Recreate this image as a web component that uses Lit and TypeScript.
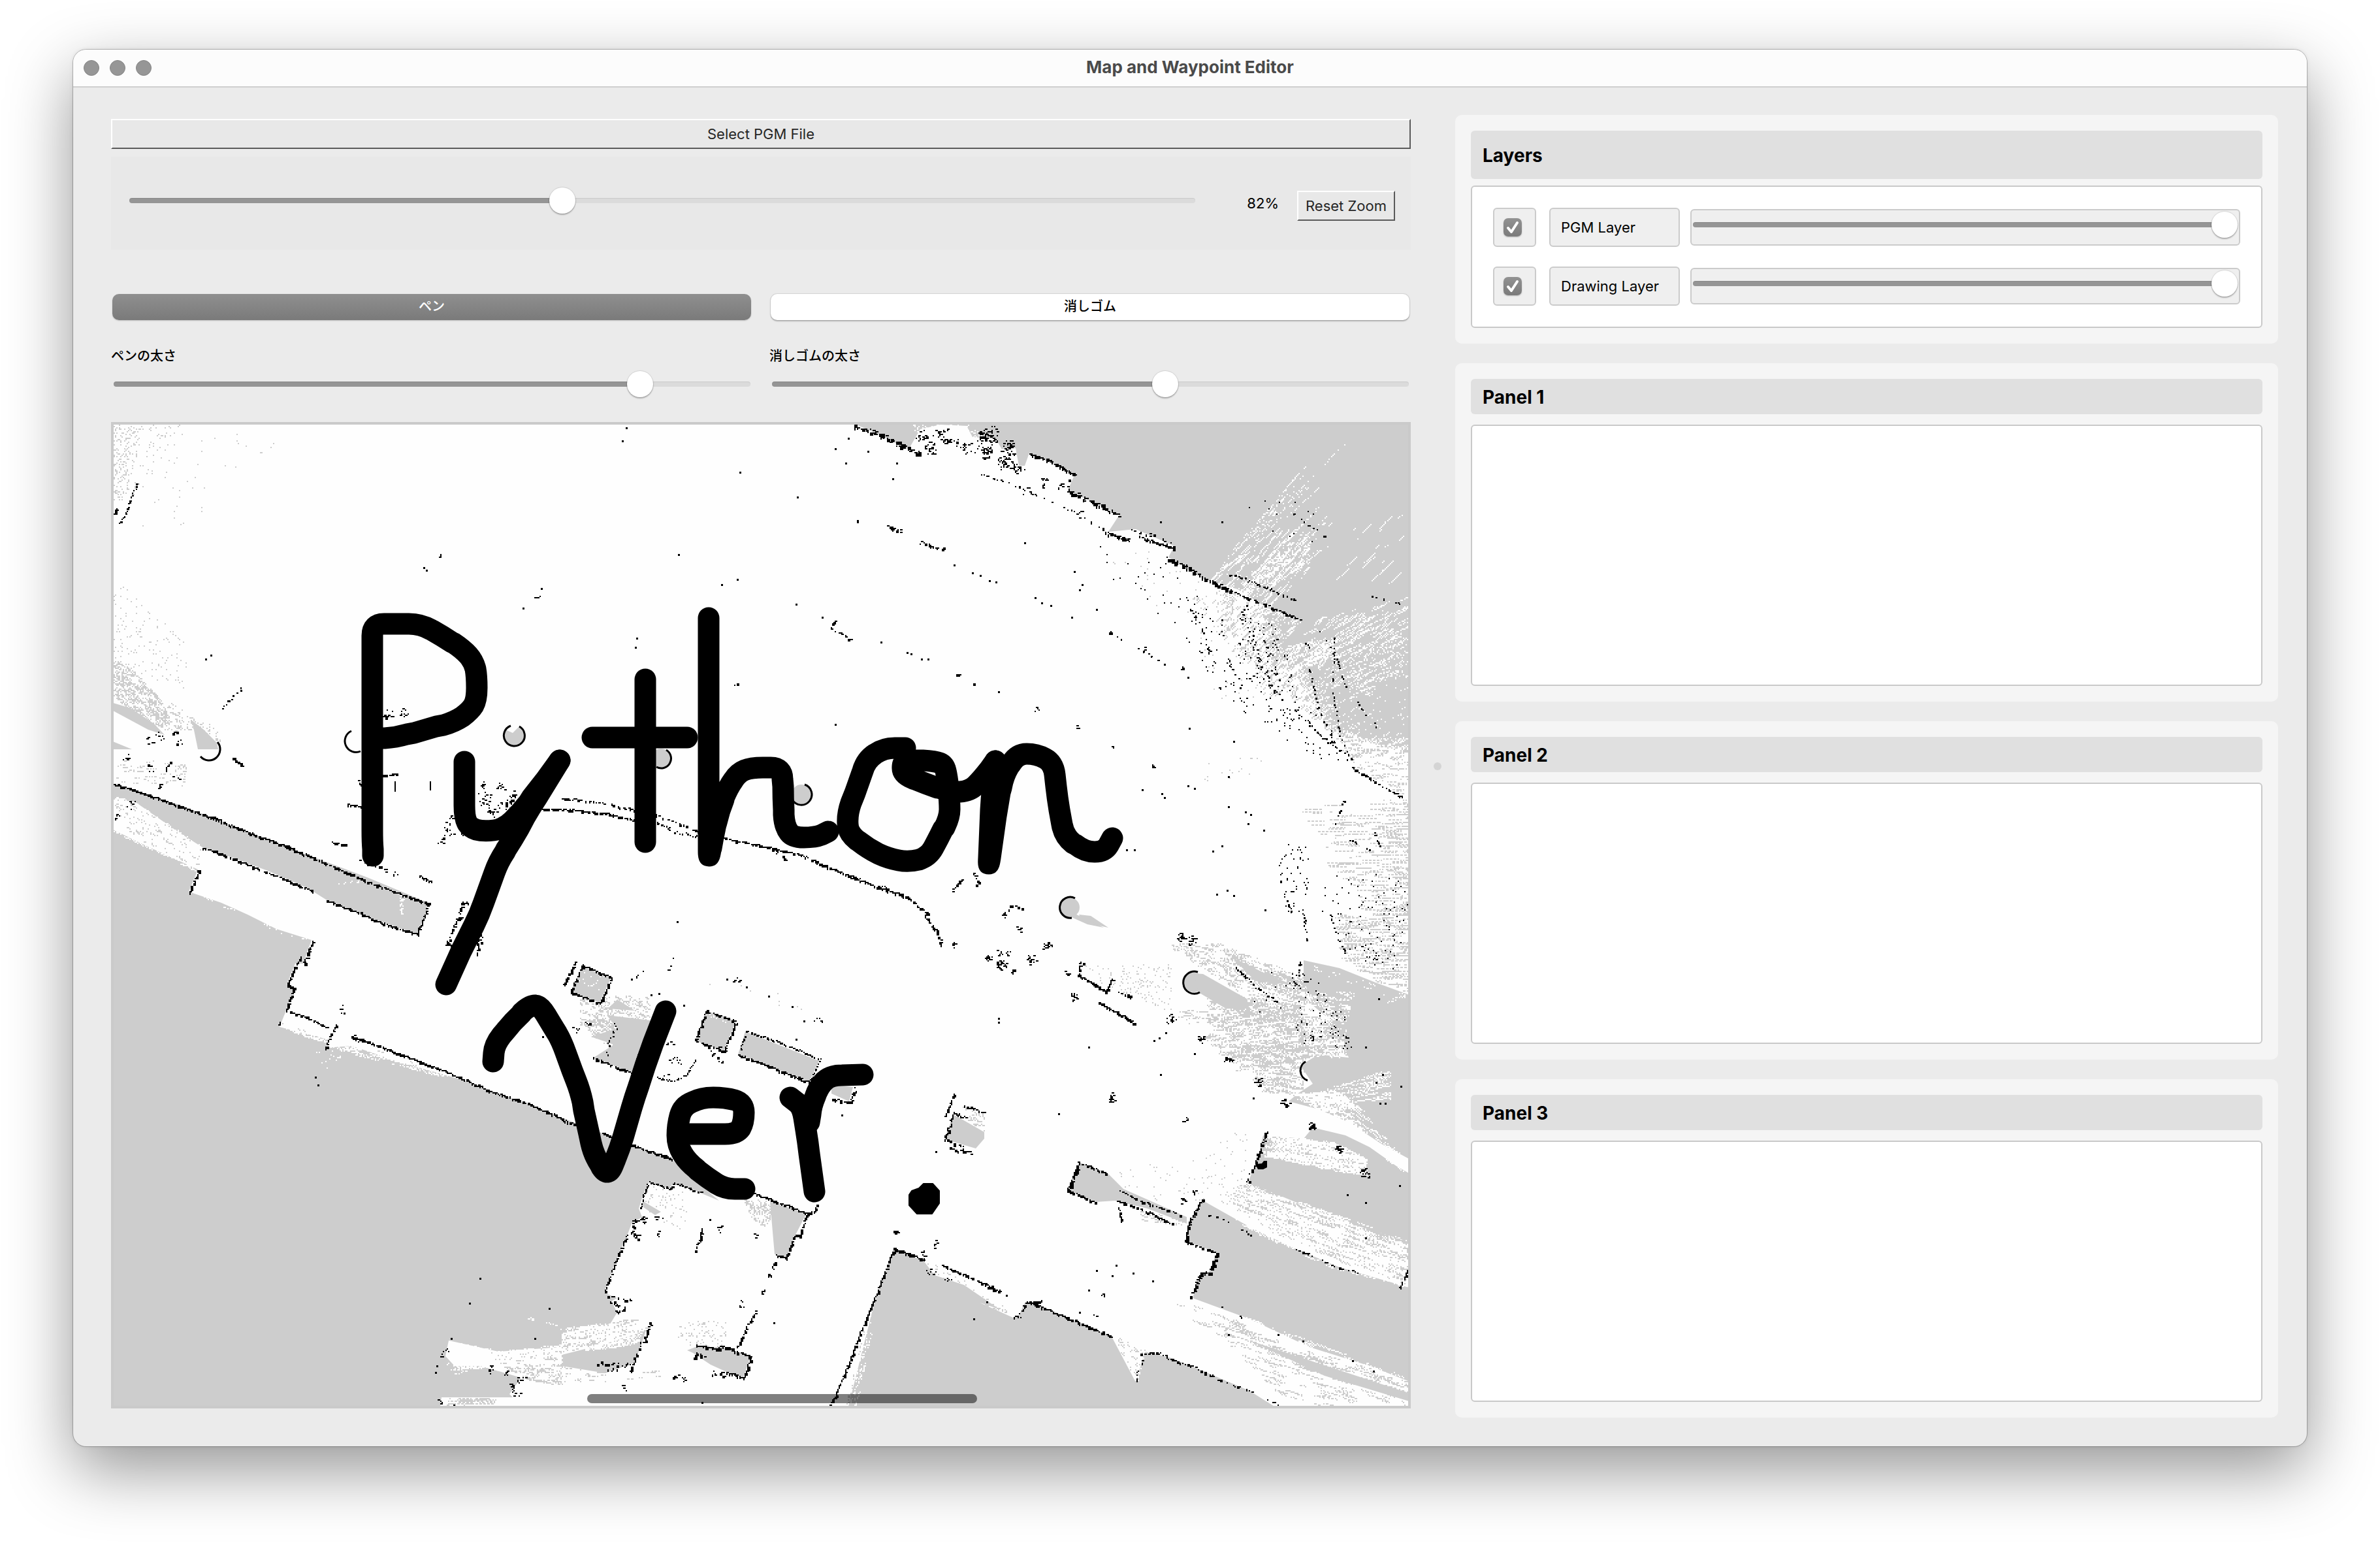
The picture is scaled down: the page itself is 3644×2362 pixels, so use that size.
import { LitElement, html, css, svg } from "lit";
import { customElement, property, state } from "lit/decorators.js";

/* ---------- map geometry ---------- */

type Pt = [number, number];

const SHEETS: Record<string, [number, number, number, number]> = {
  A: [160, 640, 0.4464, 0.4847],
  B: [860, 640, 0.4464, 0.4847],
  C: [1500, 640, 0.4592, 0.4847],
  D: [160, 1400, 0.4464, 0.4974],
  E: [860, 1400, 0.4464, 0.4974],
  F: [1500, 1400, 0.4592, 0.4974],
};

// "A30,1155 270,1225 D1070,60": a letter switches sheet for the points after it.
function pts(spec: string): Pt[] {
  let sheet = SHEETS.A;
  return spec
    .trim()
    .split(/\s+/)
    .map((token) => {
      let t = token;
      if (/[A-F]/.test(t[0])) {
        sheet = SHEETS[t[0]];
        t = t.slice(1);
      }
      const [x, y] = t.split(",").map(Number);
      return [Math.round(sheet[0] + x * sheet[2]), Math.round(sheet[1] + y * sheet[3])] as Pt;
    });
}

const toPath = (p: Pt[], close = false) => "M" + p.map((q) => q.join(" ")).join("L") + (close ? "Z" : "");
const area = (spec: string) => toPath(pts(spec), true);

// A polyline whose corners are rounded off.
function stroke(spec: string, radius = 18): string {
  const p = pts(spec);
  const toward = (a: Pt, b: Pt): string => {
    const len = Math.hypot(b[0] - a[0], b[1] - a[1]) || 1;
    const k = Math.min(radius, len / 2) / len;
    return `${Math.round(a[0] + (b[0] - a[0]) * k)} ${Math.round(a[1] + (b[1] - a[1]) * k)}`;
  };
  let d = `M${p[0].join(" ")}`;
  for (let i = 1; i < p.length - 1; i++) d += `L${toward(p[i], p[i - 1])}Q${p[i].join(" ")} ${toward(p[i], p[i + 1])}`;
  return d + `L${p[p.length - 1].join(" ")}`;
}

let seed = 7;
function rnd(): number {
  seed = (seed * 1664525 + 1013904223) >>> 0;
  return seed / 4294967296;
}
const snap = (v: number) => Math.round(v / 2) * 2;
const cell = (x: number, y: number, w = 2, h = 2) => `M${snap(x)} ${snap(y)}h${w}v${h}h${-w}z`;

function inside(x: number, y: number, p: Pt[]): boolean {
  let r = false;
  for (let i = 0, j = p.length - 1; i < p.length; j = i++) {
    const [xi, yi] = p[i];
    const [xj, yj] = p[j];
    if (yi > y !== yj > y && x < ((xj - xi) * (y - yi)) / (yj - yi) + xi) r = !r;
  }
  return r;
}

// Loose cells spread over an area, optionally as short runs in one direction (degrees).
function field(spec: string, count: number, angle = 0, run = 1): string {
  const p = pts(spec);
  const xs = p.map((q) => q[0]);
  const ys = p.map((q) => q[1]);
  const x0 = Math.min(...xs);
  const y0 = Math.min(...ys);
  const w = Math.max(...xs) - x0;
  const h = Math.max(...ys) - y0;
  const a = (angle * Math.PI) / 180;
  let d = "";
  for (let i = 0; i < count; i++) {
    const x = x0 + rnd() * w;
    const y = y0 + rnd() * h;
    if (!inside(x, y, p)) continue;
    const n = 1 + Math.floor(rnd() * run);
    for (let k = 0; k < n; k++) {
      const cx = x + Math.cos(a) * k * 3;
      const cy = y + Math.sin(a) * k * 3;
      if (inside(cx, cy, p)) d += cell(cx, cy);
    }
  }
  return d;
}

// A scanned wall: cells along a polyline with some gaps and sideways noise.
function wall(spec: string, keep = 0.9, noise = 1, size = 4): string {
  const p = pts(spec);
  let d = "";
  for (let i = 1; i < p.length; i++) {
    const [x1, y1] = p[i - 1];
    const [x2, y2] = p[i];
    const len = Math.hypot(x2 - x1, y2 - y1);
    for (let s = 0; s <= len; s += 2) {
      if (rnd() > keep) continue;
      const nx = (rnd() - 0.5) * 2 * noise;
      const ny = (rnd() - 0.5) * 2 * noise;
      const w = rnd() < 0.5 ? size : 2;
      d += cell(x1 + ((x2 - x1) * s) / len + nx, y1 + ((y2 - y1) * s) / len + ny, w, rnd() < 0.4 ? size : 2);
    }
  }
  return d;
}

// Small clumps of cells around each point.
function clumps(spec: string, count: number, radius: number): string {
  let d = "";
  for (const [x, y] of pts(spec)) {
    for (let i = 0; i < count; i++) {
      const r = rnd() * radius;
      const a = rnd() * Math.PI * 2;
      d += cell(x + Math.cos(a) * r, y + Math.sin(a) * r, rnd() < 0.4 ? 4 : 2, 2);
    }
  }
  return d;
}

const singles = (spec: string) => pts(spec).map(([x, y]) => cell(x, y, 3, 3)).join("");

// Beams leaving one point between two headings.
function beams(origin: string, from: number, to: number, near: number, far: number, count: number, keep = 0.6): string {
  const [[ox, oy]] = pts(origin);
  let d = "";
  for (let i = 0; i < count; i++) {
    const a = ((from + rnd() * (to - from)) * Math.PI) / 180;
    const start = near + rnd() * (far - near) * 0.5;
    const end = start + rnd() * (far - start);
    for (let r = start; r < end; r += 3) {
      if (rnd() < keep) d += cell(ox + Math.cos(a) * r, oy + Math.sin(a) * r);
    }
  }
  return d;
}

const UNKNOWN = [
  "A30,1155 270,1225 470,1300 700,1380 900,1450 1110,1530 D1100,0 1070,60 880,0 A760,1520 700,1485 560,1430 440,1388 335,1355 250,1305 110,1215 70,1200 30,1200",
  "A20,1295 130,1345 320,1425 290,1495 400,1530 490,1568 D590,45 710,78 680,150 655,150 625,215 650,225 622,295 600,345 765,385 760,410 850,405 1000,450 1250,515 1568,625 E60,645 250,712 380,755 500,850 540,880 460,850 380,828 370,845 300,822 280,860 265,905 275,930 240,950 225,990 180,1080 145,1165 190,1180 170,1190 190,1225 165,1260 0,1290 D1568,1330 1350,1345 1180,1310 1170,1360 1200,1390 1290,1390 1430,1425 1390,1475 1400,1485 1155,1485 1150,1530 20,1530",
  "E0,1355 150,1320 290,1280 250,1380 150,1412 0,1390",
  "A30,900 90,915 170,965 205,1000 150,985 30,925",
  "A30,1022 95,1045 30,1045",
  "A300,955 340,985 385,1025 390,1045 320,1045",
  "B985,10 1070,45 1190,100 1230,35 1300,20 1390,25 1410,60 1490,65 1510,100 C60,100 120,95 130,150 150,150 165,110 315,180 295,230 465,305 430,360 520,350 650,405 630,440 750,510 860,540 960,600 1080,640 1000,720 1060,750 1090,800 1200,760 1440,665 1440,10",
  "E70,160 170,192 130,272 32,238",
  "E155,310 305,325 250,490 110,440 180,400 100,375 190,350",
  "E190,262 250,295 160,290",
  "E495,295 598,328 555,420 458,388",
  "E630,360 882,450 848,515 605,430",
  "E925,525 1000,530 985,575 925,550",
  "E1345,615 1450,670 1450,690 1420,720 1312,692",
  "E715,885 840,918 800,990 770,1055 730,1045",
  "E430,1340 460,1330 550,1330 648,1362 622,1425 560,1405 510,1385 450,1350",
  "E275,880 340,915 320,925 280,900",
  "E140,680 180,685 157,740",
  "E1138,1030 1240,1065 1280,1110 1380,1140 1500,1215 F0,1195 110,1240 130,1235 150,1195 170,1190 440,1298 520,1440 550,1345 640,1365 720,1395 900,1465 1010,1530 E980,1530 1070,1200",
  "F745,880 900,960 1030,1020 1200,1085 1440,1150 1440,1440 1300,1390 1100,1330 900,1245 710,1180 735,1100 765,1100 790,1040 685,1005 700,940",
  "F330,762 425,795 480,845 690,930 690,950 560,905 450,880 385,885 292,848",
  "F1080,140 1200,165 1320,210 1440,250 1440,755 1340,705 1230,640 1130,600 1030,575 1060,550 1110,520 1070,465 1130,430 1230,440 1190,340 1110,280 1080,200",
  "F945,680 1080,690 1110,655 1220,680 1300,715 1390,775 1440,800 1440,1010 1200,940 1000,865 895,825 930,740",
  "F900,1310 1440,1475 1440,1500 1150,1420",
  "F840,130 960,185 1040,215 920,205",
  "F330,0 370,5 430,40 380,30 340,18",
].map(area);

const DISCS = ["A1405,1002", "B340,1075", "B823,1188", "C300,1545", "F715,210"].map((s) => pts(s)[0]);

const SPECKS_DARK = [
  field("A30,20 130,20 110,90 90,200 60,260 30,260", 230),
  field("A30,20 280,20 240,120 130,200 100,240 30,240", 90),
  field("A30,20 400,20 640,90 380,200 320,340 110,340 30,220", 70),
  field("A30,500 130,590 270,700 290,860 30,780", 230),
  field("A30,750 100,800 190,880 230,960 180,980 30,880", 700, 28, 4),
  field("A120,900 230,900 300,940 330,980 210,990", 120, 28, 3),
  field("A290,940 400,980 390,1040 320,1010", 100),
  field("A30,1080 280,1080 280,1160 30,1150", 60, 0, 3),
  field("A30,1180 120,1210 330,1350 320,1420 130,1340 30,1290", 330, 20, 4),
  field("C380,400 620,420 850,530 1000,720 850,1000 700,700", 230),
  field("C760,520 1090,640 1200,800 1440,860 1440,1060 1150,980 1000,860 850,720", 2200, -35, 4),
  field("C700,560 900,580 1100,860 950,880", 420, -45, 3),
  field("C940,600 1100,640 1220,760 1120,850 960,760", 900, -32, 6),
  field("C1080,800 1200,750 1440,660 1440,1060 1150,980", 2300, -24, 9),
  field("C1180,900 1440,800 1440,1000 1260,1000", 700, -20, 9),
  field("C1150,960 1440,1040 1440,1200 1260,1120", 320, 0, 5),
  field("C720,1080 960,1060 960,1110 720,1180", 26),
  field("C1060,1220 1440,1210 1440,1568 1280,1568 1180,1450", 260, 0, 10),
  field("C1340,1200 1440,1200 1440,1568 1300,1568", 150, 0, 8),
  field("F1180,0 1440,0 1440,250 1300,200 1200,130", 360, 0, 8),
  field("F620,90 780,80 1100,200 1110,300 900,260 700,140", 800, 15, 5),
  field("F820,110 1000,180 1090,200 1090,270 920,220", 380, 18, 8),
  field("F700,200 900,250 1080,280 1100,340 800,300", 300, 14, 6),
  field("F760,220 920,270 1080,280 1100,440 850,480 750,380", 700, -8, 8),
  field("F1060,300 1200,330 1240,430 1060,440", 420, -4, 8),
  field("F640,300 960,260 960,330 660,340", 90, -8, 5),
  field("F850,400 1080,380 1080,560 930,540", 330, 5, 7),
  field("F460,150 640,150 640,300 480,250", 150),
  field("F340,150 440,160 500,260 430,240", 70),
  field("F400,780 690,760 900,640 880,820 700,920 480,840", 190),
  field("F600,1190 720,1200 1000,1300 1440,1440 1440,1530 1050,1530 800,1300", 520, 16, 9),
  field("F800,1230 1000,1320 1440,1440 1440,1490 1100,1400 850,1300", 500, 18, 14),
  field("F780,870 890,820 1000,860 1440,1010 1440,1150 1200,1070 950,970", 1150, 19, 10),
  field("F1000,870 1440,1010 1440,1070 1200,980", 300, 19, 14),
  field("F520,900 700,930 700,960 540,940", 60, 12, 4),
  field("F0,1170 120,1230 100,1240 0,1220", 110),
  field("F440,1290 550,1340 520,1440", 120, 60, 3),
  field("E1240,1060 1350,1110 1568,1230 1500,1220 1300,1140", 260),
  field("E1120,1090 1140,1040 1060,1250 1000,1512 970,1512 1060,1190", 420, 105, 3),
  field("E60,250 300,250 300,330 60,340", 210, 20, 3),
  field("E70,320 200,320 180,410 90,370", 200, 20, 3),
  field("E490,185 830,240 820,300 500,230", 16),
  field("E1370,590 1450,610 1450,670 1390,630", 120),
  field("E270,830 420,850 430,980 280,920", 90),
  field("E620,870 720,880 730,920 690,960 650,930", 160, 75, 4),
  field("E390,1250 560,1250 560,1330 400,1320", 90),
  field("E0,1260 300,1240 290,1280 0,1350", 330, -14, 5),
  field("E0,1380 170,1410 350,1400 350,1420 0,1450", 60, 0, 4),
  field("D1300,1350 1568,1330 1568,1450 1430,1430", 300, 8, 5),
  field("D1160,1488 1340,1488 1340,1510 1160,1510", 40, 0, 8),
  field("D600,330 770,380 760,400 600,350", 40, 14, 6),
  field("D840,385 1200,500 1000,455 850,410", 120, 14, 5),
].join("");

const SPECKS_LIGHT = [
  beams("C640,640", -50, -42, 110, 400, 18, 0.4),
  beams("C640,760", -48, -36, 130, 330, 44, 0.45),
  field("C740,520 860,430 1000,340 1100,370 1100,480 960,600", 380, -48, 7),
  field("C1090,640 1440,560 1440,680 1200,760 1000,820", 260, -28, 12),
  field("C1000,720 1200,690 1130,800", 220, -28, 6),
  field("C1140,330 1440,300 1440,540 1150,560", 26, -42, 9),
  field("B1200,20 1400,20 1500,110 1230,110", 420),
  field("F1130,310 1440,215 1440,250 1150,320", 70, -14, 10),
  field("F1090,150 1330,215 1300,230 1100,170", 50, 18, 5),
  field("F1060,560 1370,470 1370,570 1120,600", 120, -10, 14),
  field("F1030,550 1200,540 1260,600 1130,610", 220, -8, 12),
  field("F1080,570 1250,570 1440,780 1400,790 1230,650", 220, 34, 10),
  field("F1130,600 1230,610 1300,680 1220,640", 120, 10, 8),
  field("F1070,240 1250,230 1200,440 1080,440", 200, 8, 6),
  field("F950,672 1180,700 1290,750 1290,800 1150,785 940,740", 520, 9, 14),
  field("F935,725 1020,730 1010,745 935,745", 30, 0, 14),
  field("F760,880 900,830 1180,920 1440,1050 1440,1150 1150,1080 900,970", 1500, 18, 9),
  field("F1000,860 1440,1000 1440,1060 1180,930", 240, 18, 10),
  field("F730,1190 900,1240 1440,1430 1440,1450 1000,1320", 600, 18, 10),
  field("F450,1310 550,1345 525,1440", 160, 60, 4),
  field("E1060,1200 1075,1230 1010,1512 985,1512", 200, 105, 3),
  field("D1180,1310 1350,1340 1568,1320 1568,1380 1200,1400", 420, 6, 10),
  field("D1160,1380 1300,1390 1200,1415", 30, -5, 5),
  field("D1410,1220 1568,1265 1568,1275 1450,1245", 40, 14, 4),
  field("E0,1270 300,1245 250,1330 0,1345", 260, -14, 10),
  field("D600,340 770,350 760,395 600,350", 130, 14, 8),
  field("D765,400 850,390 1250,515 1000,465 850,430", 420, 14, 8),
  field("D720,410 850,400 760,490", 40),
  field("D480,0 720,80 700,85 560,45", 60),
  field("A30,1190 110,1215 330,1350 310,1430 130,1350 30,1310", 600, 22, 7),
  field("A290,1490 500,1560 480,1568 380,1535", 90, 20, 4),
  field("E60,170 150,190 130,230 50,210", 30),
  field("E500,300 590,330 570,335 500,318", 30),
  field("A790,1470 880,1455 870,1465", 20),
  field("A1012,1500 1025,1500 1022,1568 1014,1568", 40),
].join("");

const WALLS = [
  wall("A30,1153 110,1178 210,1208 330,1248 470,1300 620,1352 760,1405 900,1462 1020,1505 1108,1533", 0.98),
  wall("A335,1355 400,1375 470,1402 600,1450 715,1492", 0.75),
  wall("A760,1522 890,1568 D950,25 1070,60", 0.97),
  wall("A1108,1533 D1098,0 1070,60", 0.97),
  wall("A322,1425 292,1495", 0.95),
  wall("A112,205 85,260 75,300 52,330", 0.8, 1, 3),
  wall("A45,282 32,305", 1, 2, 4),
  wall("D712,80 680,152", 1, 1, 5),
  wall("D672,130 645,170 628,215 648,225 622,295", 0.95, 1, 4),
  wall("D625,295 680,312 765,345", 0.85),
  wall("D795,335 768,380 758,415", 0.95),
  wall("D848,375 900,390 1040,438 1180,487 1320,540 1460,585 1568,625 E0,632 60,650", 0.98),
  wall("E140,672 250,712 380,752", 0.95),
  wall("E650,852 740,885 840,918 868,912 875,890", 0.98),
  wall("E840,920 815,990 798,988 768,1055 730,1045", 0.98, 1, 4),
  wall("E300,822 375,845 385,825 480,855", 0.85, 1, 3),
  wall("E298,822 280,860 268,905", 0.9, 1, 3),
  wall("E290,930 245,940 240,975 262,998", 0.7, 2),
  wall("E222,985 180,1080 143,1167", 0.9),
  wall("E150,1172 235,1187", 0.5, 2),
  wall("E165,1190 190,1200 185,1225 215,1210", 0.7, 2),
  wall("E305,1255 285,1300 250,1365 235,1410", 0.85, 2),
  wall("E92,1383 165,1380 230,1380 150,1405", 0.45, 3),
  wall("E480,960 478,990 455,1037", 0.8),
  wall("E728,1068 718,1100", 0.7),
  wall("E662,1220 635,1270 602,1330", 0.9, 1, 4),
  wall("E460,1325 530,1335 548,1325 648,1362 622,1425 560,1405", 0.97, 1, 5),
  wall("E447,1368 460,1350 500,1365", 0.85, 2, 4),
  wall("E512,1410 560,1415", 0.8, 3),
  wall("E1138,1028 1245,1062", 0.98, 1, 5),
  wall("E1138,1028 1080,1165 1040,1250 975,1400 920,1512", 0.98, 1, 4),
  wall("E1300,1078 1400,1115 1505,1158", 0.7),
  wall("F0,1133 70,1160", 0.6),
  wall("F110,1238 135,1232 152,1193 200,1190", 0.85, 2),
  wall("F170,1192 290,1240 340,1258 438,1296", 0.95, 1, 4),
  wall("F540,1350 590,1350 640,1368 720,1393 780,1422", 0.75, 2),
  wall("F780,1425 900,1465 1000,1512", 0.25, 1),
  wall("F552,1360 525,1405 518,1440", 0.45, 2),
  wall("F328,762 292,848", 1, 1, 6),
  wall("F328,762 425,796", 0.95, 1),
  wall("F292,848 385,885", 0.95, 1),
  wall("F468,848 530,878 600,900 680,928", 0.55, 1),
  wall("F452,880 540,905 645,952", 0.7, 1),
  wall("F463,900 468,940", 0.9),
  wall("F742,875 700,940 683,1005", 1, 1, 5),
  wall("F683,1005 788,1040", 0.7, 1),
  wall("F788,1040 765,1100 735,1103 702,1180", 0.98, 2, 5),
  wall("F957,670 925,740 890,825", 0.9, 2),
  wall("F325,185 420,235 445,192", 0.9, 1),
  wall("F398,270 518,333", 0.97),
  wall("F340,140 330,180", 0.9, 3),
  wall("F462,238 510,255", 0.7),
  wall("F850,158 925,225 990,268", 0.6, 1, 3),
  wall("F1000,1012 1100,1045 1200,1088 1290,1110", 0.3, 1),
  wall("F745,915 820,940 910,990", 0.3, 1, 3),
  wall("F1428,1085 1400,1150", 0.7),
  wall("F790,1200 880,1240", 0.3, 1, 3),
  wall("E70,155 170,192 130,272 32,238 70,155", 0.9),
  wall("E50,140 5,220", 0.85),
  wall("E495,295 598,328 555,420 458,388 495,295", 0.85, 1),
  wall("E490,410 550,455", 0.6, 3),
  wall("E630,358 750,395 885,445 848,515", 0.75, 1, 3),
  wall("E605,430 848,515", 1, 1, 4),
  wall("E605,430 630,370", 0.6, 1, 3),
  wall("E110,440 250,490", 0.95),
  wall("E265,430 248,490", 0.85, 2),
  wall("E185,330 150,440", 0.35, 4, 3),
  wall("E325,498 385,512 430,490 460,445", 0.7, 1, 2),
  wall("E1345,550 1312,625", 0.85, 1),
  wall("E1390,625 1345,610 1312,692 1375,715", 0.85, 2),
  wall("E1380,588 1450,610", 0.9),
  wall("E1328,718 1405,732", 0.85, 2),
  wall("E928,568 985,575 1010,530", 0.8, 2),
  wall("E228,205 282,175", 0.6, 2, 3),
  wall("E382,120 360,185", 0.3, 1, 3),
  wall("B0,1200 70,1205 160,1220 250,1238 320,1252 400,1280 470,1305", 0.65, 1, 4),
  wall("A1500,1232 B60,1238 160,1250 250,1268", 0.95, 1, 4),
  wall("B325,1270 370,1300 465,1322", 0.6, 3, 3),
  wall("B545,1325 660,1345 740,1362 820,1378 880,1405 1000,1450 1100,1485 1180,1510 1255,1565", 0.95, 1, 4),
  wall("B860,1398 1000,1450 1120,1490", 0.5, 3, 2),
  wall("B730,1360 760,1400", 0.3, 4),
  wall("E1240,0 1285,50 1300,90", 0.8, 2),
  wall("B1000,22 1080,48 1190,98 1230,112", 1, 3, 5),
  wall("C165,112 230,135 315,178", 1, 1, 5),
  wall("C295,180 295,230", 0.3, 2),
  wall("C290,228 380,265 465,305", 1, 3, 5),
  wall("C420,362 500,385", 1, 2, 5),
  wall("C500,355 570,370 650,403", 0.6, 4),
  wall("C530,372 645,412", 0.9, 1),
  wall("C620,440 680,465 750,508 830,540", 1, 2, 5),
  wall("C830,540 900,570 1070,635", 0.75, 1, 4),
  wall("C815,485 950,530 1050,575", 0.6, 2, 3),
  wall("C0,175 100,205 200,245 320,300 420,355", 0.4, 1, 3),
  wall("C1050,925 1150,1010 1240,1080", 0.4, 3, 3),
  wall("C1240,1100 1330,1155 1428,1210", 0.6, 1),
  wall("C880,590 920,740 960,830 1000,890", 0.45, 4, 3),
  wall("C680,560 730,640 770,760", 0.3, 2, 3),
  wall("C800,630 830,770 900,900", 0.3, 2, 3),
  wall("C950,690 980,800 1010,880", 0.35, 4, 3),
  wall("C1130,670 1190,760 1210,830 1290,940 1330,980", 0.22, 1, 3),
  wall("C1100,790 1125,920 1190,1040", 0.3, 1, 3),
  wall("C1180,690 1175,860 1200,1000 1240,1080", 0.28, 1, 3),
  wall("C1050,690 1140,745", 0.3, 1, 3),
  wall("C1030,290 1100,340 1165,380", 0.25, 1, 3),
  wall("C1300,560 1430,592", 0.2, 1, 3),
  wall("C430,678 540,730 620,780", 0.3, 1, 3),
  wall("C1000,1460 1040,1568", 0.3, 1, 3),
  wall("F1080,0 1088,90", 0.35, 1, 3),
  wall("F1170,0 1185,60 1222,125", 0.45, 1, 3),
  wall("F1070,140 1050,220", 0.5, 3, 3),
  wall("C1215,1210 1175,1290", 0.4, 1, 3),
  wall("C1220,1325 1300,1360", 0.4, 1, 3),
  wall("C1315,1310 1330,1350", 0.5, 1, 3),
  wall("B1115,342 1170,360", 0.9, 2),
  wall("B1230,392 1305,412", 0.9, 2),
  wall("B925,665 995,702", 0.75, 2),
  wall("B935,640 922,660", 0.7),
  wall("A955,1128 998,1125", 0.95),
  wall("A992,1145 992,1173", 1, 0, 2),
  wall("A1113,1148 1113,1173", 1, 0, 2),
  wall("A955,938 985,940", 1, 1, 4),
  wall("A832,1218 882,1228", 0.9),
  wall("A870,1142 882,1162", 0.9, 1, 4),
  wall("A780,1340 825,1348", 0.95, 1, 4),
  wall("A365,1258 402,1268", 1, 1, 5),
  wall("A440,1072 470,1098", 0.95, 1, 4),
  wall("A225,1088 210,1112", 1, 2, 4),
  wall("A248,988 228,998", 1),
  wall("A465,853 400,915 368,965", 0.25, 1, 3),
  wall("A870,1390 1000,1440", 0.5, 3),
  wall("A1078,1445 1118,1462", 0.95, 1, 4),
  wall("A1215,1560 1230,1528 1255,1530", 0.9, 2, 4),
  wall("D1225,8 1210,10 1172,90 1192,92", 0.9, 1),
  wall("D1290,65 1268,120", 0.9, 3, 4),
  wall("C95,1550 105,1538 140,1545", 1, 1, 4),
  wall("E1340,-70 1345,-85 1375,-110", 0.8, 1, 4),
  wall("E1410,-130 1430,-105 1420,-90", 0.9, 1, 4),
].join("");

const CLUMPS = [
  clumps("A1150,432 1482,562 B1360,808 1410,840 C190,920 320,978 548,730 672,790", 4, 4),
  clumps("B598,840 C435,678 445,1037 800,852 572,1098 F385,1235 410,1173", 6, 3),
  clumps("F225,95 170,138 72,155 310,250", 16, 8),
  clumps("F22,133 92,120 110,172 292,180", 6, 6),
  clumps("F668,66 708,78 635,322 735,380 830,448 928,512 1018,582 1108,650 1200,720 1285,795 438,562", 18, 8),
  clumps("F684,631 715,853 675,880 1108,380 1218,375", 6, 5),
  clumps("A970,935 1025,930 1295,1160 1360,1165", 9, 8),
  clumps("A1300,1200 1335,1245 1375,1220 1400,1195", 16, 12),
  clumps("A1160,1330 1175,1295 1190,1260 1225,1310", 10, 12),
  clumps("A185,1005 160,1020 248,1030 90,1218 40,1255 75,1075 150,1105 250,1135 185,1165", 6, 8),
  clumps("B1240,60 1300,50 1330,70 1380,85 1440,60 1445,100 1530,95 1520,140 1470,50 1260,100", 20, 14),
  clumps("C10,60 20,110 100,90 80,140 45,70 130,152", 16, 11),
  clumps("C220,200 150,225 320,300 210,190 270,210", 6, 10),
  clumps("E540,410 880,325 600,200 385,1420 420,1430 215,1450 610,1200", 5, 7),
  clumps("E1265,1095 1325,1120 1240,1035 1278,1015", 7, 8),
  clumps("E665,990 540,965 330,985 330,930 255,985 270,940", 5, 7),
  clumps("E710,1110 690,1160 1145,978", 8, 4),
  clumps("E370,390 380,440 350,495 400,450 45,350 90,335", 5, 7),
  clumps("D862,378 808,288 1410,1470 1430,1430 1400,1455 1320,1400 1380,1415", 8, 7),
  clumps("D1170,1340 1155,1360 1150,1500 600,335", 4, 6),
  clumps("E1500,120 1460,130 1500,155 1300,88 1345,88 1515,0 1565,40", 8, 7),
  field("C380,400 650,440 850,700 850,900 700,720 500,620", 110),
  field("C860,600 1000,650 1060,900 1100,960 980,960 860,780", 160),
  field("C680,560 800,600 870,900 760,830", 80),
  field("C800,880 1100,900 1250,1080 1130,1080 960,980", 120),
  field("C980,1340 1100,1340 1090,1568 1020,1568", 60),
  field("C1130,1440 1440,1440 1440,1568 1130,1568", 50),
  field("F1020,180 1120,180 1220,320 1240,420 1060,400", 130),
  field("F1120,0 1420,0 1400,180 1300,170", 80),
  field("F800,140 1000,180 1080,320 940,310", 18),
  field("C880,240 1100,240 1200,420 840,420", 12),
].join("");

const LONE = singles(
  "A1090,468 1100,478 1432,596 1495,534 345,758 360,744 B218,26 204,71 607,167 806,247 397,427 545,525 598,507 " +
    "934,93 970,141 1046,104 1131,187 1145,138 978,60 1010,320 1010,327 1345,460 1404,485 1432,496 1465,510 1485,514 " +
    "800,586 889,625 1093,705 1180,737 1194,740 1230,757 1252,760 1497,863 937,965 253,692 250,722 " +
    "C146,393 312,482 338,522 329,538 180,565 203,579 233,587 303,625 598,323 803,323 385,600 690,818 695,975 843,1020 " +
    "538,1169 605,1183 615,1197 690,1160 712,1168 825,1128 825,1223 882,1243 900,1251 891,1280 945,1297 803,1350 773,1363 487,1360 512,1360 786,1500 822,1490 843,1503 948,1550 " +
    "F359,407 599,488 259,612 577,383 595,376 616,359 712,424 359,1155 573,1123 329,1222 386,1093 454,1077 440,1110 509,1100 825,1289 993,1288 1073,1308 1239,1372 1312,1404 1222,861 1283,882 1395,833 1283,991 1326,258 1283,407 1340,488 1400,524 1317,513 1330,580 1348,580 908,560 " +
    "D719,496 728,520 1284,1115 1247,1192 1521,1211 1471,1300 1187,1300 1135,1388 1131,1408 1193,1505 1499,371 817,301 " +
    "E392,18 330,242 303,246 415,275 562,198 630,222 707,248 788,281 827,323 803,379 956,615 1495,318 1495,330 1282,727 724,1255 1409,1240 1456,1190 1521,1170 477,1500 503,935",
);

const PEN = [
  "A920,1382 918,1340 918,650 1085,650 1160,690 1230,730 1265,768 1277,815 1277,890 1255,925 1200,960 1100,985 1000,1008 920,1010",
  "A1234,1085 1234,1260 1250,1292 1300,1305 1370,1298 1430,1245 1490,1170 1562,1082",
  "A1562,1082 1460,1230 1400,1330 1350,1400 D1285,0 1240,80 1171,215",
  "B287,825 287,1340",
  "B105,1008 430,1008",
  "B504,632 504,1400 520,1320 540,1240 572,1165 605,1120 650,1103 758,1103 760,1200 765,1290 792,1325 870,1325 915,1305",
  "B1178,1042 1105,1042 1045,1080 1020,1150 980,1250 982,1310 1050,1360 1120,1390 1190,1403 1260,1385 1290,1330 1330,1260 1330,1210 1322,1130 1312,1095 1280,1083 1170,1080 1168,1125 1250,1155 1330,1180 1400,1178 1440,1140 1488,1084",
  "B1488,1084 1475,1200 1463,1425 C60,1220 78,1130 125,1060 190,1060 245,1090 260,1200 280,1320 350,1370 415,1370 442,1327",
  "D1333,452 1338,400 1400,330 1460,278 1495,280 1535,340 1568,390 E35,480 62,540 85,640 110,740 160,808 200,720 250,560 300,430 357,297",
  "E435,675 600,675 625,640 625,580 560,563 480,563 415,590 397,650 397,710 430,760 500,810 560,845 628,845",
  "E783,562 825,590 845,700 868,852",
  "E848,640 855,590 880,530 920,495 1033,493",
].map((s) => stroke(s));

const ring = (spec: string, r: number, from: number, to: number) => {
  const [[cx, cy]] = pts(spec);
  const p = (a: number) => `${Math.round(cx + r * Math.cos((a * Math.PI) / 180))} ${Math.round(cy + r * Math.sin((a * Math.PI) / 180))}`;
  return `M${p(from)}A${r} ${r} 0 ${to - from > 180 ? 1 : 0} 1 ${p(to)}`;
};
const RINGS = [
  ring("A1405,1002", 16, -60, 250),
  ring("A865,1020", 17, 70, 240),
  ring("A362,1050", 17, -50, 150),
  ring("B340,1075", 15, -60, 120),
  ring("B823,1188", 16, -70, 150),
  ring("C300,1545", 16, 80, 300),
  ring("F715,210", 17, 60, 290),
  ring("F1105,480", 16, 110, 240),
].join("");

const mapDrawing = svg`
  <rect x="174" y="650" width="1982" height="1502" fill="#fefefe"></rect>
  <g fill="#cdcdcd">
    ${UNKNOWN.map((d) => svg`<path d=${d}></path>`)}
    ${DISCS.map(([x, y]) => svg`<circle cx=${x} cy=${y} r="15"></circle>`)}
    <path d="M1640 1396L1690 1420L1665 1415L1636 1402Z"></path>
    <path d=${area("F715,180 745,182 890,260 900,290 820,290 730,240")}></path>
    <path d=${SPECKS_DARK} shape-rendering="crispEdges"></path>
  </g>
  <path d=${area("A1375,985 1385,972 1425,972 1400,995")} fill="#fefefe"></path>
  <path d=${SPECKS_LIGHT} fill="#fefefe" shape-rendering="crispEdges"></path>
  <g fill="#000" shape-rendering="crispEdges">
    <path d=${WALLS}></path>
    <path d=${CLUMPS}></path>
    <path d=${LONE}></path>
  </g>
  <path d=${area("F918,768 940,765 948,757 958,757 958,778 945,785 928,785")} fill="#000"></path>
  <path d=${RINGS} fill="none" stroke="#000" stroke-width="3"></path>
  <g fill="none" stroke="#000" stroke-width="33" stroke-linecap="round" stroke-linejoin="round">
    ${PEN.map((d) => svg`<path d=${d}></path>`)}
  </g>
  <path d=${area("E1192,862 1200,850 1225,842 1240,829 1272,829 1294,850 1294,888 1270,920 1218,920 1192,895")} fill="#000" stroke="#000" stroke-width="2" stroke-linejoin="round"></path>
`;

/* ---------- slider ---------- */

@customElement("range-slider")
export class RangeSlider extends LitElement {
  @property() label = "";
  @property({ type: Number }) value = 0;

  static styles = css`
    :host {
      display: block;
    }
    .range {
      appearance: none;
      display: block;
      width: 100%;
      height: 40px;
      margin: 0;
      background: transparent;
    }
    .range::-webkit-slider-runnable-track {
      height: 8px;
      border-radius: 4px;
      box-shadow: inset 0 1px 1px rgba(0, 0, 0, 0.08);
      background: linear-gradient(to right, #959595 var(--fill), #dbdbdb var(--fill));
    }
    .range::-webkit-slider-thumb {
      appearance: none;
      width: 40px;
      height: 40px;
      margin-top: -16px;
      border-radius: 50%;
      background: #fff;
      box-shadow: 0 0 1px 1px rgba(0, 0, 0, 0.1), 0 2px 2px rgba(0, 0, 0, 0.24);
    }
  `;

  render() {
    const at = this.value / 1000;
    return html`<input
      class="range"
      type="range"
      min="0"
      max="1000"
      aria-label=${this.label}
      .value=${String(this.value)}
      style="--fill: calc(20px + (100% - 40px) * ${at})"
      @input=${(e: Event) => (this.value = Number((e.target as HTMLInputElement).value))}
    />`;
  }
}

/* ---------- window ---------- */

@customElement("app-root")
export class AppRoot extends LitElement {
  @state() private tool = "pen";

  private layers = ["PGM Layer", "Drawing Layer"];
  private panels = ["Panel 1", "Panel 2", "Panel 3"];

  static styles = css`
    :host {
      display: flex;
      box-sizing: border-box;
      min-height: 100vh;
      padding: 76px 112px 148px;
      background: #fff;
      color: #000;
      font: 22px/30px Inter, "Noto Sans CJK JP", sans-serif;
    }
    * {
      box-sizing: border-box;
    }
    .window {
      flex: 1;
      display: flex;
      flex-direction: column;
      min-width: 0;
      border-radius: 20px;
      background: #ebebeb;
      box-shadow: 0 0 0 1px rgba(0, 0, 0, 0.22), 0 0 6px rgba(0, 0, 0, 0.1), 0 36px 100px rgba(0, 0, 0, 0.42);
    }
    .titlebar {
      display: grid;
      grid-template-columns: 1fr auto 1fr;
      align-items: center;
      height: 58px;
      padding: 0 16px;
      border-bottom: 2px solid #cfcfcf;
      border-radius: 20px 20px 0 0;
      background: #fcfcfc;
    }
    .lights {
      display: flex;
      gap: 16px;
    }
    .light {
      width: 24px;
      height: 24px;
      padding: 0;
      border: 1px solid #858585;
      border-radius: 50%;
      background: #969696;
    }
    .title {
      margin: 0;
      padding-bottom: 2px;
      color: #4a4a4a;
      font-size: 26px;
      font-weight: 700;
      line-height: 32px;
    }
    .body {
      flex: 1;
      display: flex;
      padding: 42px 44px 44px 58px;
    }
    .editor {
      flex: 1990 1 0;
      min-width: 0;
      display: flex;
      flex-direction: column;
      padding: 6px 0 14px;
    }
    .raised {
      height: 46px;
      padding: 0 14px;
      border: 2px solid;
      border-color: #fff #5a5a5a #5a5a5a #fff;
      background: #e8e8e8;
      color: #262626;
      font: inherit;
      white-space: nowrap;
    }
    .zoom {
      display: flex;
      align-items: center;
      height: 142px;
      margin-top: 12px;
      padding: 0 24px 0 28px;
      background: #e8e8e8;
    }
    .zoom-slider {
      flex: 1;
      margin-bottom: 8px;
    }
    .zoom-value {
      width: 156px;
      padding-right: 28px;
      text-align: right;
    }
    .reset {
      width: 150px;
      margin-top: 8px;
      padding: 0;
    }
    .tools {
      display: grid;
      grid-template-columns: 1fr 1fr;
      column-gap: 26px;
      margin-top: 68px;
      font-size: 20px;
      font-weight: 500;
    }
    .tool {
      height: 40px;
      margin: 0 2px;
      padding: 0 0 2px;
      border: 0;
      border-radius: 10px;
      background: #fff;
      box-shadow: 0 0 1px 1px rgba(0, 0, 0, 0.1), 0 2px 2px rgba(0, 0, 0, 0.22);
      color: #000;
      font: inherit;
    }
    .tool.active {
      background: linear-gradient(#8f8f8f, #7a7a7a);
      box-shadow: 0 1px 2px rgba(0, 0, 0, 0.2);
      color: #fff;
    }
    .tool-label {
      margin: 40px 0 8px;
    }
    .tool-slider {
      margin: 0 3px 0 4px;
    }
    .canvas {
      position: relative;
      flex: 1;
      min-height: 300px;
      margin-top: 38px;
      border: 4px solid #cacaca;
      background: #cdcdcd;
      overflow: hidden;
    }
    .map {
      position: absolute;
      inset: 0;
      width: 100%;
      height: 100%;
    }
    .scrollbar {
      position: absolute;
      left: 36.6%;
      bottom: 4px;
      width: 30.1%;
      height: 14px;
      border-radius: 7px;
      background: rgba(0, 0, 0, 0.5);
    }
    .splitter {
      display: flex;
      align-items: center;
      width: 68px;
      padding-left: 35px;
    }
    .grip {
      width: 12px;
      height: 12px;
      border-radius: 50%;
      background: #d4d4d4;
    }
    .side {
      flex: 1260 1 0;
      min-width: 0;
      display: flex;
      flex-direction: column;
      gap: 30px;
    }
    .card {
      display: flex;
      flex-direction: column;
      padding: 24px;
      border-radius: 10px;
      background: #f5f5f5;
    }
    .panel {
      flex: 1;
      gap: 16px;
    }
    .layers {
      gap: 10px;
    }
    .heading {
      margin: 0;
      padding: 11px 18px 9px;
      border-radius: 6px;
      background: #e0e0e0;
      font-size: 28px;
      font-weight: 700;
      line-height: 34px;
    }
    .layers .heading {
      padding: 21px 18px 19px;
    }
    .box {
      flex: 1;
      border: 2px solid #c9c9c9;
      border-radius: 6px;
      background: #fff;
    }
    .layer-list {
      display: flex;
      flex-direction: column;
      gap: 30px;
      padding: 32px;
    }
    .layer {
      display: flex;
      align-items: center;
    }
    .cell {
      border: 2px solid #cbcbcb;
      border-radius: 6px;
      background: #efefef;
    }
    .check-cell {
      display: flex;
      align-items: center;
      width: 66px;
      height: 60px;
      margin-right: 20px;
      padding-left: 14px;
    }
    .check {
      position: relative;
      display: block;
      width: 28px;
      height: 28px;
    }
    .check-input {
      appearance: none;
      display: block;
      width: 28px;
      height: 28px;
      margin: 0;
      border-radius: 7px;
      background: linear-gradient(#929292, #7b7b7b);
      box-shadow: 0 1px 2px rgba(0, 0, 0, 0.25);
    }
    .check-mark {
      position: absolute;
      inset: 0;
      pointer-events: none;
      visibility: hidden;
    }
    .check-input:checked + .check-mark {
      visibility: visible;
    }
    .name-cell {
      width: 200px;
      height: 60px;
      margin-right: 16px;
      padding: 13px 16px;
      white-space: nowrap;
    }
    .slider-cell {
      flex: 1;
      height: 56px;
      padding: 2px;
    }
  `;

  private renderTool(id: string, name: string) {
    return html`<button
      class="tool ${this.tool === id ? "active" : ""}"
      aria-pressed=${this.tool === id}
      @click=${() => (this.tool = id)}
    >
      ${name}
    </button>`;
  }

  private renderLayer(name: string, i: number) {
    return html`<div class="layer">
      <div class="cell check-cell">
        <span class="check">
          <input class="check-input" id="layer-${i}" type="checkbox" checked />
          <svg class="check-mark" viewBox="0 0 28 28">
            <path d="M7 15L12 21L21 7" fill="none" stroke="#fff" stroke-width="4" stroke-linecap="round" stroke-linejoin="round"></path>
          </svg>
        </span>
      </div>
      <label class="cell name-cell" for="layer-${i}">${name}</label>
      <div class="cell slider-cell"><range-slider label=${name} .value=${1000}></range-slider></div>
    </div>`;
  }

  render() {
    return html`<main class="window">
      <header class="titlebar">
        <div class="lights">
          <button class="light" aria-label="Close"></button>
          <button class="light" aria-label="Minimize"></button>
          <button class="light" aria-label="Zoom"></button>
        </div>
        <h1 class="title">Map and Waypoint Editor</h1>
      </header>
      <div class="body">
        <section class="editor">
          <button class="raised">Select PGM File</button>
          <div class="zoom">
            <range-slider class="zoom-slider" label="Zoom" .value=${404}></range-slider>
            <span class="zoom-value">82%</span>
            <button class="raised reset">Reset Zoom</button>
          </div>
          <div class="tools">
            ${this.renderTool("pen", "ペン")} ${this.renderTool("eraser", "消しゴム")}
            <div class="tool-label">ペンの太さ</div>
            <div class="tool-label">消しゴムの太さ</div>
            <range-slider class="tool-slider" label="ペンの太さ" .value=${841}></range-slider>
            <range-slider class="tool-slider" label="消しゴムの太さ" .value=${622}></range-slider>
          </div>
          <div class="canvas">
            <svg class="map" viewBox="174 650 1982 1502" preserveAspectRatio="xMidYMid slice">${mapDrawing}</svg>
            <div class="scrollbar"></div>
          </div>
        </section>
        <div class="splitter"><div class="grip"></div></div>
        <aside class="side">
          <section class="card layers">
            <h2 class="heading">Layers</h2>
            <div class="box layer-list">${this.layers.map((n, i) => this.renderLayer(n, i))}</div>
          </section>
          ${this.panels.map(
            (name) => html`<section class="card panel">
              <h2 class="heading">${name}</h2>
              <div class="box"></div>
            </section>`,
          )}
        </aside>
      </div>
    </main>`;
  }
}
